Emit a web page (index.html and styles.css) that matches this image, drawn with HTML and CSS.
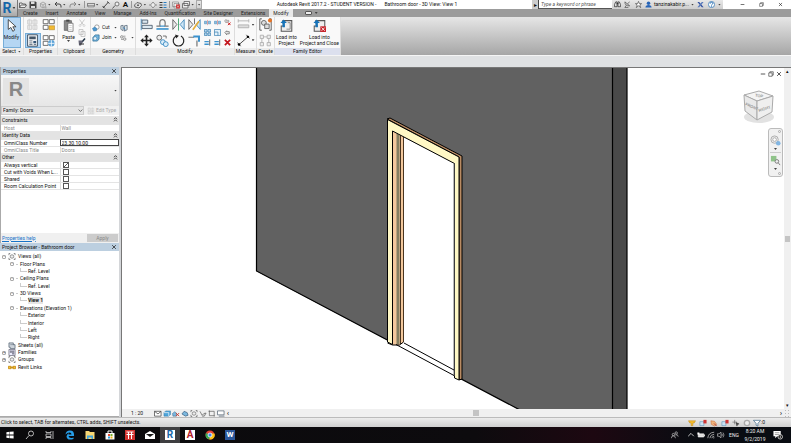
FILE: index.html
```html
<!DOCTYPE html>
<html lang="en">
<head>
  <meta charset="UTF-8" />
  <meta name="viewport" content="width=device-width, initial-scale=1.0"/>
  <title>Autodesk Revit 2017.2</title>
  <link rel="stylesheet" href="styles.css">
</head>
<body>

<!-- Icon set -->
<svg class="sprite" xmlns="http://www.w3.org/2000/svg">
  <symbol id="open" viewBox="0 0 16 16"><path d="M1 13V4h5l1 2h6v2M1 13l3-5h11l-3 5z" fill="#eee" stroke="#444" stroke-width="1.5"/></symbol>
  <symbol id="save" viewBox="0 0 16 16"><path d="M1 1h12l2 2v12H1z" fill="#444"/><path d="M4 1h7v5H4zM4 10h8v4H4z" fill="#ddd"/></symbol>
  <symbol id="sync" viewBox="0 0 16 16"><path d="M3 5l5-3 5 3v6l-5 3-5-3zM3 5l5 3 5-3M8 8v6" fill="none" stroke="#999" stroke-width="1.5"/><path d="M11 11h4v4h-4z" fill="#aaa"/></symbol>
  <symbol id="undo" viewBox="0 0 16 16"><path d="M6 2L2 6l4 4M2 6h8q4 0 4 4v3" fill="none" stroke="#444" stroke-width="2"/></symbol>
  <symbol id="redo" viewBox="0 0 16 16"><path d="M10 2l4 4-4 4M14 6H6q-4 0-4 4v3" fill="none" stroke="#888" stroke-width="2"/></symbol>
  <symbol id="ruler" viewBox="0 0 16 16"><path d="M1 4v7M15 4v7M2 5h12" fill="none" stroke="#666" stroke-width="1.5"/><path d="M2 9h12v3H2z" fill="#bbb" stroke="#777"/></symbol>
  <symbol id="line" viewBox="0 0 16 16"><path d="M2 14L13 2M1 10l5 5M10 1l5 4" fill="none" stroke="#444" stroke-width="2"/></symbol>
  <symbol id="tag" viewBox="0 0 16 16"><path d="M1 15l5-6" stroke="#555" stroke-width="2"/><circle cx="10" cy="6" r="4" fill="#eee" stroke="#555" stroke-width="1.5"/></symbol>
  <symbol id="house" viewBox="0 0 16 16"><path d="M1 8l5-5 8 2 1 4-5 5-8-2z" fill="#ddd" stroke="#444" stroke-width="1.5"/><path d="M6 7h4v3H6z" fill="#666"/></symbol>
  <symbol id="section" viewBox="0 0 16 16"><path d="M8 2l5 6-5 6-5-6zM0 8h3M13 8h3" fill="#eee" stroke="#777" stroke-width="1.5"/></symbol>
  <symbol id="thin" viewBox="0 0 16 16"><path d="M1 3h6M1 8h6M1 13h6" stroke="#333" stroke-width="2"/><path d="M9 3h6M9 8h6M9 13h6" stroke="#2b7dc0" stroke-width="2"/></symbol>
  <symbol id="closewin" viewBox="0 0 16 16"><path d="M1 2h12v9H1zM4 5h10v9H4z" fill="#eee" stroke="#666"/><path d="M8 7h8v8H8z" fill="#c33"/><path d="M10 9l4 4m0-4l-4 4" stroke="#fff"/></symbol>
  <symbol id="windows" viewBox="0 0 16 16"><path d="M4 1h11v8H4zM1 5h11v9H1z" fill="#eee" stroke="#555" stroke-width="1.5"/></symbol>

  <symbol id="cursor" viewBox="0 0 16 20"><path d="M3 1v15l4-3 3 6 3-2-3-5h5z" fill="#fff" stroke="#333" stroke-width="1.3"/></symbol>
  <symbol id="family" viewBox="0 0 32 32"><g fill="#eee" stroke="#ccc" stroke-width="2"><path d="M4 5h10v10H4zM17 5h10v10H17zM4 18h10v10H4zM17 18h10v10H17zM8 2v26M22 2v26"/></g></symbol>
  <symbol id="props" viewBox="0 0 32 32"><path d="M4 2h24v28H4z" fill="#fff" stroke="#234" stroke-width="2"/><path d="M8 6h16v7H8z" fill="#456"/><path d="M8 17h8M8 22h8M8 26h8M19 26h6" stroke="#456" stroke-width="2"/><path d="M18 17h7v6h-7z" fill="#357"/></symbol>
  <symbol id="types" viewBox="0 0 32 32"><path d="M3 4h12v10H3zM18 4h12v10H18zM3 18h12v10H3z" fill="#fff" stroke="#555" stroke-width="2"/><path d="M17 19h14v10H17z" fill="#f2ba32" stroke="#986b12"/></symbol>
  <symbol id="params" viewBox="0 0 32 32"><path d="M3 4h12v10H3zM18 4h12v10H18zM3 18h12v10H3z" fill="#fff" stroke="#555" stroke-width="2"/><circle cx="23" cy="23" r="8" fill="#5ba3d8"/><path d="M15 23h16M23 15v16" stroke="#fff" stroke-width="2"/></symbol>
  <symbol id="paste" viewBox="0 0 32 40"><path d="M3 5h22v30H3z" fill="#888" stroke="#555" stroke-width="2"/><path d="M9 2h10v6H9z" fill="#444"/><path d="M14 13h16v25H14z" fill="#fff" stroke="#555" stroke-width="2"/><path d="M18 20h8M18 26h8M18 32h8" stroke="#bbb" stroke-width="2"/></symbol>
  <symbol id="scissors" viewBox="0 0 16 16"><path d="M3 1l8 11M13 1L5 12" stroke="#bbb" stroke-width="1.5"/><circle cx="4" cy="13" r="2" fill="none" stroke="#bbb"/><circle cx="12" cy="13" r="2" fill="none" stroke="#bbb"/></symbol>
  <symbol id="copyclip" viewBox="0 0 16 16"><path d="M2 1h8v10H2zM6 5h8v10H6z" fill="#f7f7f7" stroke="#bbb" stroke-width="1.5"/></symbol>
  <symbol id="brush" viewBox="0 0 16 16"><path d="M14 1L8 8" stroke="#234" stroke-width="3"/><path d="M1 5h8v4l-3 6H2z" fill="#667"/><path d="M3 12h9" stroke="#333" stroke-width="2"/></symbol>
  <symbol id="cutgeo" viewBox="0 0 18 16"><circle cx="11" cy="6" r="5" fill="#fff" stroke="#777" stroke-width="1.5"/><path d="M1 9l5-3 5 3-1 5-6 1z" fill="#4b97d0" stroke="#276c9e"/></symbol>
  <symbol id="joingeo" viewBox="0 0 18 16"><path d="M7 1h9v9l-4 5H2V7z" fill="#72b5df" stroke="#286892" stroke-width="1.5"/><circle cx="7" cy="9" r="4" fill="#e7f4fc" stroke="#286892"/></symbol>
  <symbol id="split" viewBox="0 0 18 16"><path d="M2 3l5-1v12l-5-3zM10 3l6-1v10l-6 3z" fill="#dce8ee" stroke="#456" stroke-width="1.5"/><path d="M7 7l5 4" stroke="#3380bb" stroke-width="2"/></symbol>
  <symbol id="circles" viewBox="0 0 22 16"><circle cx="5" cy="5" r="3.5" fill="#eee" stroke="#555" stroke-width="1.5"/><circle cx="13" cy="11" r="3.5" fill="#eee" stroke="#555" stroke-width="1.5"/><path d="M9 3h6M3 12h5" stroke="#555" stroke-width="1.5"/></symbol>
  <symbol id="align" viewBox="0 0 32 32"><path d="M3 2v28" stroke="#2c80be" stroke-width="2"/><path d="M5 5h14v8H5zM5 18h25v8H5z" fill="#dbe8f1" stroke="#456" stroke-width="2"/></symbol>
  <symbol id="offset" viewBox="0 0 32 32"><path d="M1 20h9q-3-16 6-16t6 16h9" fill="none" stroke="#777" stroke-width="3"/><path d="M1 27h30" stroke="#3b92ce" stroke-width="4"/><path d="M10 20h12" stroke="#3b92ce" stroke-width="3"/></symbol>
  <symbol id="mirror" viewBox="0 0 32 32"><path d="M2 4l10 12L2 28z" fill="#eee" stroke="#555" stroke-width="2"/><path d="M30 4L20 16l10 12z" fill="#cfe5f5" stroke="#3984b8" stroke-width="2"/><path d="M16 1v30" stroke="#2c9b5c" stroke-width="2"/></symbol>
  <symbol id="mirrordraw" viewBox="0 0 32 32"><path d="M2 4l10 12L2 28z" fill="#eee" stroke="#555" stroke-width="2"/><path d="M30 4L20 16l10 12z" fill="#cfe5f5" stroke="#3984b8" stroke-width="2"/><path d="M12 29L27 8" stroke="#e6ae37" stroke-width="4"/><path d="M16 1v14" stroke="#555" stroke-width="2"/></symbol>
  <symbol id="move" viewBox="0 0 32 32"><path d="M16 1l6 7h-4v6h6v-4l7 6-7 6v-4h-6v6h4l-6 7-6-7h4v-6H8v4l-7-6 7-6v4h6V8h-4z" fill="#222"/></symbol>
  <symbol id="copy" viewBox="0 0 32 32"><circle cx="8" cy="9" r="6" fill="#eee" stroke="#555" stroke-width="2"/><path d="M17 5h8v6" fill="none" stroke="#555" stroke-width="2"/><circle cx="17" cy="20" r="6" fill="#dceefa" stroke="#2c82be" stroke-width="2"/><circle cx="24" cy="25" r="6" fill="#dceefa" stroke="#2c82be" stroke-width="2"/></symbol>
  <symbol id="rotate" viewBox="0 0 32 32"><path d="M10 5a13 13 0 1 0 12 0" fill="none" stroke="#222" stroke-width="3"/><path d="M8 1l9 3-7 7z" fill="#222"/></symbol>
  <symbol id="trim" viewBox="0 0 32 32"><path d="M1 8h14M22 16v15" fill="none" stroke="#777" stroke-width="3"/><path d="M13 6h14v13" fill="none" stroke="#3b92ce" stroke-width="5"/></symbol>
  <symbol id="splitel" viewBox="0 0 16 16"><path d="M1 5h5v6H1zM10 5h5v6h-5z" fill="#8bc0e4" stroke="#2e77ab"/><path d="M8 2v12" stroke="#c44"/></symbol>
  <symbol id="unpin" viewBox="0 0 16 16"><path d="M1 4l4-3v2h6v4H5v2z" fill="#ddd" stroke="#666"/><path d="M9 8l6 6m0-6l-6 6" stroke="#c00" stroke-width="2"/></symbol>
  <symbol id="array" viewBox="0 0 16 16"><path d="M1 1h6v6H1zM9 1h6v6H9zM1 9h6v6H1zM9 9h6v6H9z" fill="#b5d7ee" stroke="#2e77ab" stroke-width="1.5"/></symbol>
  <symbol id="scale" viewBox="0 0 16 16"><path d="M1 1h14v14H1z" fill="#e3f1fa" stroke="#2e77ab" stroke-width="1.5"/><path d="M1 7h8v8" fill="none" stroke="#2e77ab" stroke-width="1.5"/></symbol>
  <symbol id="pin" viewBox="0 0 16 16"><path d="M2 8l4-4v2h6v5H6v2z" fill="#eee" stroke="#555" stroke-width="1.5"/></symbol>
  <symbol id="extend" viewBox="0 0 16 16"><path d="M13 1v14" stroke="#555" stroke-width="2"/><path d="M1 6h10M1 12h10" stroke="#3b92ce" stroke-width="3"/></symbol>
  <symbol id="delete" viewBox="0 0 16 16"><path d="M2 2l12 12M14 2L2 14" stroke="#c3141c" stroke-width="4"/></symbol>
  <symbol id="measure" viewBox="0 0 32 32"><path d="M3 7h26M3 3v8M29 3v8" stroke="#aaa" stroke-width="2"/><path d="M3 17h26v7H3z" fill="#ddd" stroke="#aaa" stroke-width="2"/></symbol>
  <symbol id="dimension" viewBox="0 0 32 32"><path d="M5 26L27 7M1 21l8 9M23 2l8 9" stroke="#222" stroke-width="2"/><circle cx="5" cy="26" r="3"/><circle cx="27" cy="7" r="3"/></symbol>
  <symbol id="group" viewBox="0 0 32 32"><path d="M7 2H2v28h5M25 2h5v28h-5" fill="none" stroke="#444" stroke-width="2"/><circle cx="12" cy="12" r="6" fill="#ddd" stroke="#555" stroke-width="2"/><path d="M14 15h11v11H14z" fill="#ddd" stroke="#555" stroke-width="2"/><circle cx="27" cy="6" r="5" fill="#e87424"/></symbol>
  <symbol id="similar" viewBox="0 0 32 32"><path d="M3 3h8v8H3zM20 3h8v8h-8zM3 21h8v8H3zM20 21h8v8h-8zM11 7h9M7 11v10M24 11v10" fill="#eee" stroke="#aaa" stroke-width="2"/></symbol>
  <symbol id="load" viewBox="0 0 32 32"><path d="M7 11V4h22v26H3V17h9" fill="#eee" stroke="#555" stroke-width="2.5"/><path d="M19 9h6v16h-9" fill="none" stroke="#777" stroke-width="2"/><path d="M9 1l8 9h-5v10H6V10H1z" fill="#1673b9"/></symbol>
  <symbol id="loadclose" viewBox="0 0 32 32"><path d="M7 11V4h22v26H3V17h9" fill="#eee" stroke="#555" stroke-width="2.5"/><path d="M9 1l8 9h-5v10H6V10H1z" fill="#1673b9"/><path d="M18 18h14v14H18z" fill="#c8242b"/><path d="M21 21l8 8m0-8l-8 8" stroke="#fff" stroke-width="2"/></symbol>

  <symbol id="binoc" viewBox="0 0 16 16"><path d="M1 13V8l3-6h3v11zM9 13V2h3l3 6v5z" fill="#ddd" stroke="#222" stroke-width="1.5"/><path d="M6 6h4" stroke="#222" stroke-width="2"/></symbol>
  <symbol id="dish" viewBox="0 0 16 16"><path d="M2 2q0 10 11 9zM5 10l-3 5h8M8 6l5-4" fill="none" stroke="#444" stroke-width="1.5"/></symbol>
  <symbol id="star" viewBox="0 0 16 16"><path d="M8 1l2 5h5l-4 3 2 6-5-4-5 4 2-6-4-3h5z" fill="#fff" stroke="#333" stroke-width="1.3"/></symbol>
  <symbol id="person" viewBox="0 0 16 16"><circle cx="8" cy="5" r="4" fill="#2764b7"/><path d="M1 15q0-6 7-6t7 6z" fill="#2764b7"/></symbol>
  <symbol id="exchange" viewBox="0 0 16 16"><path d="M1 2h4l10 12h-4z" fill="#2d4da0"/><path d="M15 2h-4L1 14h4z" fill="#5577bb"/></symbol>
  <symbol id="help" viewBox="0 0 16 16"><circle cx="8" cy="8" r="7" fill="#fff" stroke="#1865ad" stroke-width="1.5"/><path d="M5 6q0-3 3-3t3 3q0 1-3 3v1M8 11v2" fill="none" stroke="#1865ad" stroke-width="2"/></symbol>
  <symbol id="min" viewBox="0 0 16 16"><path d="M2 8h12" stroke="#222" stroke-width="2"/></symbol>
  <symbol id="restore" viewBox="0 0 16 16"><path d="M2 5h9v9H2zM5 5V2h9v9h-3" fill="none" stroke="#222" stroke-width="1.5"/></symbol>
  <symbol id="x" viewBox="0 0 16 16"><path d="M3 3l10 10M13 3L3 13" stroke="#222" stroke-width="2"/></symbol>
  <symbol id="chevs" viewBox="0 0 16 16"><path d="M3 7l5-5 5 5M3 14l5-5 5 5" fill="none" stroke="#222" stroke-width="2.5"/></symbol>
  <symbol id="chev" viewBox="0 0 16 16"><path d="M2 5l6 6 6-6" fill="none" stroke="#555" stroke-width="2.5"/></symbol>
  <symbol id="views" viewBox="0 0 16 16"><path d="M4 1H1v4M12 1h3v4M4 15H1v-4M12 15h3v-4" fill="none" stroke="#555" stroke-width="1.5"/><circle cx="8" cy="8" r="4" fill="#eee" stroke="#666" stroke-width="1.5"/></symbol>
  <symbol id="sheet" viewBox="0 0 16 16"><path d="M1 2h10v4h4v9H4v-3H1z" fill="#cdd3da" stroke="#456" stroke-width="1.5"/><path d="M4 6h8" stroke="#456"/></symbol>
  <symbol id="fam" viewBox="0 0 16 16"><path d="M1 1h14v14H1z" fill="#eef" stroke="#556" stroke-width="1.5"/><path d="M4 4h3v4H4zM9 4h3v8H9z" fill="#99a" stroke="#556"/></symbol>
  <symbol id="link" viewBox="0 0 20 16"><path d="M1 5h7v6H1zM12 5h7v6h-7zM6 8h8" fill="#f5c43a" stroke="#c3860b" stroke-width="2"/></symbol>

  <symbol id="detail" viewBox="0 0 18 16"><path d="M1 3h15v11H1z" fill="#fff" stroke="#333" stroke-width="1.5"/><path d="M1 3l8 6 7-6" fill="none" stroke="#333" stroke-width="1.5"/></symbol>
  <symbol id="style" viewBox="0 0 18 16"><path d="M2 6l4-4h11v8l-4 4H2z" fill="#4fa5da" stroke="#276f9c"/><path d="M2 6h11v8" fill="none" stroke="#fff" stroke-width="1.5"/></symbol>
  <symbol id="sun" viewBox="0 0 18 16"><path d="M1 8l5-4 4 3v7H2z" fill="#7bb8df" stroke="#357"/><path d="M9 7l7 7m0-7l-7 7" stroke="#c32" stroke-width="2"/></symbol>
  <symbol id="shadow" viewBox="0 0 18 16"><path d="M2 9l5-6 7 3 2 6-6 2z" fill="#7bb8df" stroke="#357" stroke-width="1.5"/></symbol>
  <symbol id="crop" viewBox="0 0 18 16"><path d="M3 1v12h12M1 3h13v12" fill="none" stroke="#555" stroke-width="1.5"/></symbol>
  <symbol id="region" viewBox="0 0 18 16"><path d="M1 2h15v9H1zM4 14h13" fill="#fff" stroke="#456" stroke-width="1.5"/></symbol>
  <symbol id="glasses" viewBox="0 0 18 16"><path d="M2 3l5 9 4-4 5-1-4 7H7" fill="#ddd" stroke="#555" stroke-width="1.5"/></symbol>
  <symbol id="selhand" viewBox="0 0 18 16"><path d="M1 3h16l-3 5h-3v6H7V8H4z" fill="#f5bd2e" stroke="#b87d0c"/></symbol>
  <symbol id="selred" viewBox="0 0 18 16"><path d="M2 5h9v9H2z" fill="#c9e2f3" stroke="#377cab"/><path d="M10 1h7v8h-7z" fill="#cf3434"/></symbol>
  <symbol id="selorange" viewBox="0 0 18 16"><path d="M2 3l8 1 5 7-5 4-7-4z" fill="#f0b47d" stroke="#c25820"/><path d="M9 9l6 6" stroke="#a33" stroke-width="2"/></symbol>
  <symbol id="seldrag" viewBox="0 0 18 16"><path d="M6 1v10M1 6h10M9 7l7 3-3 1-2 4z" fill="#333" stroke="#333"/></symbol>
  <symbol id="ring" viewBox="0 0 18 16"><circle cx="9" cy="8" r="6" fill="#eee" stroke="#aaa" stroke-width="3"/></symbol>
  <symbol id="filter" viewBox="0 0 18 16"><path d="M1 2h16l-6 7v6l-4-2V9z" fill="#fff" stroke="#345f80" stroke-width="1.5"/></symbol>

  <symbol id="win" viewBox="0 0 20 20"><path d="M1 3l8-1v7H1zM10 2l9-1v8h-9zM1 11h8v7l-8-1zM10 11h9v8l-9-1z" fill="#fff"/></symbol>
  <symbol id="search" viewBox="0 0 20 20"><circle cx="12" cy="7" r="5" fill="none" stroke="#eee" stroke-width="1.5"/><path d="M8 11l-6 7" stroke="#eee" stroke-width="1.5"/></symbol>
  <symbol id="taskview" viewBox="0 0 20 20"><path d="M2 2v3h10V2M2 8h10v5H2zM2 18v-3h10v3M16 2v16" fill="none" stroke="#ddd" stroke-width="1.5"/></symbol>
  <symbol id="edge" viewBox="0 0 20 20"><path d="M18 12H7q1 5 7 4l3-1v3q-13 4-14-5 0-4 5-7-1 2-1 3h6q0-4-4-4-4 0-8 4Q2 1 10 1q9 0 8 11z" fill="#279ee8"/></symbol>
  <symbol id="explorer" viewBox="0 0 20 20"><path d="M1 2h7l2 2h9v14H1z" fill="#f8d775"/><path d="M4 11h12v7h-3v-3H7v3H4z" fill="#42a5dc"/></symbol>
  <symbol id="store" viewBox="0 0 20 20"><path d="M6 6V2h8v4" fill="none" stroke="#fff" stroke-width="2"/><path d="M1 6h18v13H1z" fill="#fff"/><path d="M6 8h4v4H6z" fill="#e64c31"/><path d="M11 8h4v4h-4z" fill="#7bb22d"/><path d="M6 13h4v4H6z" fill="#2a9ce0"/><path d="M11 13h4v4h-4z" fill="#f4b71d"/></symbol>
  <symbol id="redapp" viewBox="0 0 20 20"><path d="M0 0h20v20H0z" fill="#d2332f"/><path d="M3 4h14M3 9h14M7 4v14M13 4v14" stroke="#fff" stroke-width="2"/></symbol>
  <symbol id="mail" viewBox="0 0 20 20"><path d="M0 8l10-6 10 6v10H0z" fill="#fff"/><path d="M2 8h16l-8 6z" fill="#161616"/></symbol>
  <symbol id="chrome" viewBox="0 0 20 20"><circle cx="10" cy="10" r="9" fill="#e84335"/><path d="M10 10L2 6a9 9 0 0 0 7 13z" fill="#35a853"/><path d="M10 10l-1 9A9 9 0 0 0 19 7h-9z" fill="#fbc116"/><circle cx="10" cy="10" r="4" fill="#4286f4" stroke="#fff" stroke-width="1.5"/></symbol>
  <symbol id="people" viewBox="0 0 20 20"><circle cx="13" cy="5" r="3" fill="none" stroke="#ddd" stroke-width="1.5"/><circle cx="6" cy="9" r="3" fill="none" stroke="#ddd" stroke-width="1.5"/><path d="M1 18q0-6 5-6t5 6M11 10q6-3 7 4" fill="none" stroke="#ddd" stroke-width="1.5"/></symbol>
  <symbol id="up" viewBox="0 0 20 20"><path d="M3 13l7-7 7 7" fill="none" stroke="#eee" stroke-width="2"/></symbol>
  <symbol id="battery" viewBox="0 0 20 20"><path d="M3 7h14v8H3z" fill="#ddd" stroke="#fff" stroke-width="1.5"/><path d="M18 9h2v4h-2zM1 4h5v5H1z" fill="#fff"/></symbol>
  <symbol id="wifi" viewBox="0 0 20 20"><path d="M2 18Q3 4 18 3M7 18Q8 9 18 8M12 18q1-5 6-5" fill="none" stroke="#bbb" stroke-width="2"/><path d="M15 18h3v-3z" fill="#fff"/></symbol>
  <symbol id="sound" viewBox="0 0 20 20"><path d="M1 7h4l5-4v14l-5-4H1zM12 7q3 3 0 6M15 4q5 6 0 12" fill="none" stroke="#ddd" stroke-width="1.5"/></symbol>
  <symbol id="notify" viewBox="0 0 22 22"><path d="M1 2h16v12H9l-4 4v-4H1z" fill="#fff"/><path d="M4 6h10M4 10h10" stroke="#333"/><circle cx="16" cy="15" r="5" fill="#111" stroke="#fff" stroke-width="1.5"/><path d="M16 12v6" stroke="#fff" stroke-width="1.5"/></symbol>
</svg>

<div class="app">
  <header class="top">
    <button class="app-button"><b>R</b><i class="caret"></i></button>

    <div class="titlebar">
      <div class="qat">
        <button><svg><use href="#open"/></svg></button>
        <button><svg><use href="#save"/></svg></button>
        <button><svg><use href="#sync"/></svg></button><i class="caret"></i>
        <button><svg><use href="#undo"/></svg></button><i class="caret"></i>
        <button><svg><use href="#redo"/></svg></button><i class="caret"></i>
        <i class="sep"></i>
        <button><svg><use href="#ruler"/></svg></button><i class="caret"></i>
        <button><svg><use href="#line"/></svg></button>
        <button><svg><use href="#tag"/></svg></button>
        <button class="text-tool">A</button>
        <i class="sep"></i>
        <button><svg><use href="#house"/></svg></button><i class="caret"></i>
        <button><svg><use href="#section"/></svg></button>
        <button><svg><use href="#thin"/></svg></button>
        <i class="sep"></i>
        <button><svg><use href="#closewin"/></svg></button>
        <button><svg><use href="#windows"/></svg></button><i class="caret"></i>
        <button class="more"><i class="caret"></i></button>
      </div>
      <div class="title"><span>Autodesk Revit 2017.2 - STUDENT VERSION -</span><span>Bathroom door - 3D View: View 1</span></div>
      <div class="info">
        <button class="play" aria-label="Show search">&#9656;</button>
        <input class="search" type="text" placeholder="Type a keyword or phrase" aria-label="Search help">
        <div class="info-tools">
          <button><svg><use href="#binoc"/></svg></button>
          <button><svg><use href="#dish"/></svg></button>
          <button><svg><use href="#star"/></svg></button>
          <button class="user"><svg><use href="#person"/></svg>tanzinakabir.p...<i class="caret"></i></button>
          <button><svg><use href="#exchange"/></svg></button>
          <button><svg><use href="#help"/></svg></button><i class="caret"></i>
        </div>
      </div>
      <div class="win-buttons">
        <button aria-label="Minimize"><svg><use href="#min"/></svg></button>
        <button aria-label="Restore"><svg><use href="#restore"/></svg></button>
        <button aria-label="Close"><svg><use href="#x"/></svg></button>
      </div>
    </div>

    <nav class="tabs">
      <button>Create</button>
      <button>Insert</button>
      <button>Annotate</button>
      <button>View</button>
      <button>Manage</button>
      <button>Add-Ins</button>
      <button>Quantification</button>
      <button>Site Designer</button>
      <button>Extensions</button>
      <button class="active">Modify</button>
      <button class="collapse" aria-label="Collapse ribbon"><i class="pill"></i><i class="caret"></i></button>
    </nav>
  </header>

  <div class="ribbon">
    <section class="panel p-select">
      <div class="tools"><button class="big on"><svg class="mid"><use href="#cursor"/></svg>Modify</button></div>
      <h2>Select <i class="caret"></i></h2>
    </section>
    <section class="panel p-props">
      <div class="tools grid2">
        <button><svg class="mid"><use href="#family"/></svg></button>
        <button><svg class="mid"><use href="#types"/></svg></button>
        <button class="on"><svg class="mid"><use href="#props"/></svg></button>
        <button><svg class="mid"><use href="#params"/></svg></button>
      </div>
      <h2>Properties</h2>
    </section>
    <section class="panel p-clip">
      <div class="tools">
        <button class="big"><svg class="mid"><use href="#paste"/></svg>Paste<i class="caret"></i></button>
        <div class="stack">
          <button><svg><use href="#scissors"/></svg></button>
          <button><svg><use href="#copyclip"/></svg></button>
          <button><svg><use href="#brush"/></svg></button>
        </div>
      </div>
      <h2>Clipboard</h2>
    </section>
    <section class="panel p-geo">
      <div class="tools geo">
        <button><svg><use href="#cutgeo"/></svg>Cut</button><i class="caret"></i><button><svg><use href="#split"/></svg></button><i></i>
        <button><svg><use href="#joingeo"/></svg>Join</button><i class="caret"></i><button><svg><use href="#circles"/></svg></button><i class="caret"></i>
      </div>
      <h2>Geometry</h2>
    </section>
    <section class="panel p-modify">
      <div class="tools">
        <div class="grid4">
          <button><svg class="mid"><use href="#align"/></svg></button>
          <button><svg class="mid"><use href="#offset"/></svg></button>
          <button><svg class="mid"><use href="#mirror"/></svg></button>
          <button><svg class="mid"><use href="#mirrordraw"/></svg></button>
          <button><svg class="mid"><use href="#move"/></svg></button>
          <button><svg class="mid"><use href="#copy"/></svg></button>
          <button><svg class="mid"><use href="#rotate"/></svg></button>
          <button><svg class="mid"><use href="#trim"/></svg></button>
        </div>
        <div class="grid3">
          <button><svg><use href="#splitel"/></svg></button>
          <button><svg><use href="#splitel"/></svg></button>
          <button><svg><use href="#unpin"/></svg></button>
          <button><svg><use href="#array"/></svg></button>
          <button><svg><use href="#scale"/></svg></button>
          <button><svg><use href="#pin"/></svg></button>
          <button><svg><use href="#extend"/></svg></button>
          <button><svg><use href="#extend"/></svg></button>
          <button><svg><use href="#delete"/></svg></button>
        </div>
      </div>
      <h2>Modify</h2>
    </section>
    <section class="panel p-measure">
      <div class="tools pair">
        <button><svg class="mid"><use href="#measure"/></svg><i class="caret"></i></button>
        <button><svg class="mid"><use href="#dimension"/></svg><i class="caret"></i></button>
      </div>
      <h2>Measure</h2>
    </section>
    <section class="panel p-create">
      <div class="tools pair">
        <button><svg class="mid"><use href="#group"/></svg></button>
        <button><svg class="mid"><use href="#similar"/></svg></button>
      </div>
      <h2>Create</h2>
    </section>
    <section class="panel p-family">
      <div class="tools">
        <button class="big"><svg class="mid"><use href="#load"/></svg>Load into<br>Project</button>
        <button class="big"><svg class="mid"><use href="#loadclose"/></svg>Load into<br>Project and Close</button>
      </div>
      <h2>Family Editor</h2>
    </section>
  </div>

  <div class="options"></div>

  <main class="work">
    <aside class="side">
      <section class="properties">
        <h3>Properties<button aria-label="Close"><svg><use href="#x"/></svg></button></h3>
        <div class="type"><span class="thumb">R</span><i class="caret"></i></div>
        <div class="family-row">
          <div class="select-wrap">
            <select aria-label="Family"><option>Family: Doors</option></select>
            <svg><use href="#chev"/></svg>
          </div>
          <button disabled><svg><use href="#family"/></svg>Edit Type</button>
        </div>
        <table>
          <tbody>
            <tr class="group"><th colspan="2"><span>Constraints<svg><use href="#chevs"/></svg></span></th></tr>
            <tr class="off"><td>Host</td><td>Wall</td></tr>
            <tr class="group"><th colspan="2"><span>Identity Data<svg><use href="#chevs"/></svg></span></th></tr>
            <tr><td><label for="omni">OmniClass Number</label></td><td class="edit"><input id="omni" type="text" value="23.30.10.00"></td></tr>
            <tr class="off"><td>OmniClass Title</td><td>Doors</td></tr>
            <tr class="group"><th colspan="2"><span>Other<svg><use href="#chevs"/></svg></span></th></tr>
            <tr><td><label for="vertical">Always vertical</label></td><td><input id="vertical" type="checkbox" checked></td></tr>
            <tr><td><label for="voids">Cut with Voids When L...</label></td><td><input id="voids" type="checkbox"></td></tr>
            <tr><td><label for="shared">Shared</label></td><td><input id="shared" type="checkbox"></td></tr>
            <tr><td><label for="room">Room Calculation Point</label></td><td><input id="room" type="checkbox"></td></tr>
          </tbody>
        </table>
        <footer><a href="#">Properties help</a><button disabled>Apply</button></footer>
      </section>

      <section class="browser">
        <h3>Project Browser - Bathroom door<button aria-label="Close"><svg><use href="#x"/></svg></button></h3>
        <ul>
          <li><i class="box">−</i><svg><use href="#views"/></svg>Views (all)</li>
          <li class="l1"><i class="box">−</i><i class="dash"></i>Floor Plans</li>
          <li class="l2"><i class="elbow"></i>Ref. Level</li>
          <li class="l1"><i class="box">−</i><i class="dash"></i>Ceiling Plans</li>
          <li class="l2"><i class="elbow"></i>Ref. Level</li>
          <li class="l1"><i class="box">−</i><i class="dash"></i>3D Views</li>
          <li class="l2"><i class="elbow"></i><b>View 1</b></li>
          <li class="l1"><i class="box">−</i><i class="dash"></i>Elevations (Elevation 1)</li>
          <li class="l2"><i class="elbow"></i>Exterior</li>
          <li class="l2"><i class="elbow"></i>Interior</li>
          <li class="l2"><i class="elbow"></i>Left</li>
          <li class="l2"><i class="elbow"></i>Right</li>
          <li><i class="nobox"></i><svg><use href="#sheet"/></svg>Sheets (all)</li>
          <li><i class="box">+</i><svg><use href="#fam"/></svg>Families</li>
          <li><i class="box">+</i><svg><use href="#views"/></svg>Groups</li>
          <li><i class="nobox"></i><svg><use href="#link"/></svg>Revit Links</li>
        </ul>
      </section>
    </aside>

    <section class="view">
      <div class="canvas">
        <svg class="scene" viewBox="122 68 662 341" preserveAspectRatio="xMinYMin slice">
          <!-- wall -->
          <path d="M256 68H613V459L256 271z" fill="#616161"/>
          <path d="M612 68h15v345h-15z" fill="#4a4a4a"/>
          <path d="M256.500 68V271L520 410M612.500 68V410M627 68V410" fill="none" stroke="#000" stroke-width="1.200"/>
          <!-- opening -->
          <path d="M392 131L454 163V385L388 350V340z" fill="#fff"/>
          <!-- inner jamb -->
          <path d="M392 131l12 6V342l-4 3h-8z" fill="#f3c89d"/>
          <path d="M396.500 133l3 2V344h-3z" fill="#858062"/>
          <path d="M400.500 135V344M403.500 137V342" stroke="#4a3520"/>
          <!-- frame -->
          <path d="M387 119l3-1 72 38v223l-3 1V157z" fill="#b98b63" stroke="#000"/>
          <path d="M387.500 119.500L459 157V380L454.500 378V163.500L392.500 131V344.500L387.500 342z" fill="#fff8c5" stroke="#000"/>
          <path d="M454 163.500V376" stroke="#777"/>
          <path d="M387.500 343l5 2h7l4-3" fill="none" stroke="#000"/>
          <!-- threshold -->
          <path d="M396 344.500L454 375.500M404 343L454 370" fill="none" stroke="#000"/>
        </svg>
        <div class="mdi">
          <button aria-label="Minimize view"><svg><use href="#min"/></svg></button>
          <button aria-label="Restore view"><svg><use href="#restore"/></svg></button>
          <button aria-label="Close view"><svg><use href="#x"/></svg></button>
        </div>
        <svg class="cube" viewBox="0 0 36 38">
          <ellipse cx="18" cy="29" rx="15" ry="6" fill="#e2e2e2"/>
          <path d="M3 7l15-4 14 5-16 5z" fill="#f4f4f4" stroke="#aaa"/>
          <path d="M3 7l13 6v19L4 23z" fill="#e9e9e9" stroke="#aaa"/>
          <path d="M32 8l-16 5v19l15-8z" fill="#efefef" stroke="#aaa"/>
          <text x="14" y="9" transform="rotate(8 17 8)">TOP</text>
          <text x="4" y="17" transform="rotate(24 4 17)">FRONT</text>
          <text x="18" y="24" transform="rotate(-18 18 24)">RIGHT</text>
        </svg>
        <div class="navbar">
          <i class="dot"></i>
          <svg viewBox="0 0 24 24"><circle cx="10" cy="10" r="8" fill="#eee" stroke="#aaa" stroke-width="2"/><circle cx="10" cy="10" r="4" fill="#fff" stroke="#aaa" stroke-width="2"/><circle cx="18" cy="18" r="5" fill="#82b6e3"/></svg>
          <i class="caret"></i>
          <hr>
          <svg viewBox="0 0 24 24"><path d="M2 2h12v12H2z" fill="#8fc389"/><circle cx="15" cy="14" r="4" fill="#eee" stroke="#777" stroke-width="2"/><path d="M18 17l4 5" stroke="#777" stroke-width="2"/></svg>
          <i class="caret"></i>
          <i class="dot last"></i>
        </div>
      </div>
      <div class="vscroll"><span>&#9652;</span><i></i><span>&#9662;</span></div>
      <div class="viewbar">
        <span class="ratio">1 : 20</span>
        <button><svg><use href="#detail"/></svg></button>
        <button><svg><use href="#style"/></svg></button>
        <button><svg><use href="#sun"/></svg></button>
        <button><svg><use href="#shadow"/></svg></button>
        <button><svg><use href="#views"/></svg></button>
        <button><svg><use href="#glasses"/></svg></button>
        <button><svg><use href="#crop"/></svg></button>
        <button><svg><use href="#region"/></svg></button>
        <span class="arrow">&lsaquo;</span>
        <div class="hscroll"><i></i></div>
        <span class="arrow">&rsaquo;</span>
      </div>
      <div class="grip"></div>
    </section>
  </main>

  <div class="status">
    <span>Click to select, TAB for alternates, CTRL adds, SHIFT unselects.</span>
    <div class="status-tools">
      <button><svg><use href="#selhand"/></svg></button>
      <button><svg><use href="#selred"/></svg></button>
      <button><svg><use href="#selorange"/></svg></button>
      <button><svg><use href="#selred"/></svg></button>
      <button><svg><use href="#seldrag"/></svg></button>
      <button><svg><use href="#ring"/></svg></button>
      <button class="count"><svg><use href="#filter"/></svg>:0</button>
    </div>
  </div>

  <footer class="taskbar">
    <div class="apps">
      <button><svg><use href="#win"/></svg></button>
      <button><svg><use href="#search"/></svg></button>
      <button><svg><use href="#taskview"/></svg></button>
      <button><svg><use href="#edge"/></svg></button>
      <button><svg><use href="#explorer"/></svg></button>
      <button><svg><use href="#store"/></svg></button>
      <button><svg><use href="#redapp"/></svg></button>
      <button><svg><use href="#mail"/></svg></button>
      <button class="active"><b class="tile revit">R</b></button>
      <button><b class="tile acad">A</b></button>
      <button><svg><use href="#chrome"/></svg></button>
      <button><b class="tile word">W</b></button>
    </div>
    <div class="tray">
      <svg class="people"><use href="#people"/></svg>
      <svg><use href="#up"/></svg>
      <svg><use href="#battery"/></svg>
      <svg><use href="#wifi"/></svg>
      <svg><use href="#sound"/></svg>
      <span class="lang">ENG</span>
      <time>8:20 AM<br>9/2/2019</time>
      <svg class="notify"><use href="#notify"/></svg>
    </div>
  </footer>
</div>

</body>
</html>
```
FILE: styles.css
```css
* { box-sizing: border-box; }
body {
  margin: 0;
  font-family: Roboto, "Open Sans", sans-serif;
  font-size: 5px;
  line-height: 7px;
  color: #111;
  overflow: hidden;
}
h2, h3, ul { margin: 0; padding: 0; font-size: 5px; font-weight: normal; }
button, input, select { font: inherit; color: inherit; }
button {
  display: flex;
  align-items: center;
  justify-content: center;
  padding: 0;
  border: 0;
  background: none;
  white-space: nowrap;
}
svg { display: block; flex: none; width: 8px; height: 8px; }
svg.mid { width: 13px; height: 13px; }
.sprite { position: absolute; width: 0; height: 0; }
.caret {
  flex: none;
  width: 3px;
  height: 2px;
  background: #444;
  clip-path: polygon(0 0, 100% 0, 50% 100%);
}
.app {
  display: flex;
  flex-direction: column;
  height: 100vh;
}

/* Title bar and tabs */
.top {
  display: grid;
  grid-template-columns: 18px 1fr;
  grid-template-rows: 9px 8px;
  background: #9c9c9c;
}
.app-button {
  grid-row: 1 / 3;
  gap: 1px;
  background: linear-gradient(#e4e4e4, #a9a9a9);
  border: 1px solid #777;
  border-top: 0;
}
.app-button b { font-size: 14px; line-height: 14px; color: #1766a8; }
.titlebar { display: flex; background: #fff; }
.qat {
  display: flex;
  align-items: center;
  width: 184px;
  background: linear-gradient(#e8e8e8, #cecece);
}
.qat button { width: 10px; }
.qat .caret { margin-right: 2px; }
.qat .sep { width: 1px; height: 7px; margin: 0 1px; background: #999; }
.qat .text-tool { font-weight: bold; font-size: 8px; }
.qat .more { width: 6px; height: 9px; border: 1px solid #aaa; }
.qat .more .caret { margin: 0; }
.title {
  flex: 1;
  display: flex;
  align-items: center;
  justify-content: center;
  gap: 8px;
  white-space: nowrap;
}
.info { display: flex; width: 191px; }
.play { width: 7px; background: #ccc; border-right: 1px solid #444; font-size: 6px; }
.search {
  width: 73px;
  height: 9px;
  padding: 0 2px;
  border: 0;
  border-bottom: 1px solid #555;
  background: #fff;
  font-style: italic;
}
.search::placeholder { color: #555; }
.info-tools {
  flex: 1;
  display: flex;
  align-items: center;
  justify-content: space-between;
  padding: 0 2px;
  background: linear-gradient(#e8e8e8, #cecece);
}
.info-tools svg { width: 7px; height: 7px; }
.user { gap: 2px; }
.win-buttons { display: flex; padding: 0 1px 0 10px; }
.win-buttons button { width: 19px; }
.win-buttons svg { width: 5px; height: 5px; }
.tabs { display: flex; padding-left: 1px; }
.tabs button { padding: 0 4px; color: #222; }
.tabs .active { background: #e9e9e9; }
.tabs .collapse { gap: 3px; padding-left: 12px; }
.pill { width: 7px; height: 4px; border: 1px solid #555; border-radius: 1px; background: #eee; }

/* Ribbon */
.ribbon {
  display: flex;
  height: 39px;
  background: linear-gradient(#e6e6e6, #a6a6a6);
  border-bottom: 1px solid #f5f5f5;
}
.panel {
  display: flex;
  flex-direction: column;
  border-right: 1px solid #ddd;
  background: #f9f9f9;
}
.panel h2 {
  display: flex;
  align-items: center;
  justify-content: center;
  gap: 2px;
  height: 7px;
  background: #ececec;
  white-space: nowrap;
}
.tools { flex: 1; display: flex; justify-content: center; }
.big { flex-direction: column; justify-content: flex-start; padding-top: 2px; line-height: 6px; text-align: center; }
.big svg { margin-bottom: 2px; }
.on { background: #b5d6f3; box-shadow: inset 0 0 0 1px #76add8; }
.p-select { width: 24px; }
.p-select .big { width: 18px; }
.p-props { width: 34px; }
.p-clip { width: 33px; }
.p-geo { width: 45px; }
.p-modify { width: 99px; }
.p-measure { width: 22px; }
.p-create { width: 18px; }
.p-family { width: 66px; }
.p-family h2 { background: #dce0ee; }
.p-family .tools { gap: 3px; }
.grid2 { display: grid; grid-template-columns: 16px 16px; grid-template-rows: 1fr 1fr; }
.p-clip .tools { gap: 3px; }
.stack { display: flex; flex-direction: column; justify-content: space-evenly; }
.geo { display: grid; grid-template-columns: 19px 3px 8px 3px; grid-template-rows: 10px 10px; gap: 0 3px; align-items: center; align-content: center; }
.geo button { justify-content: flex-start; gap: 2px; }
.p-modify .tools { justify-content: space-between; padding: 0 2px; }
.grid4 { display: grid; grid-template-columns: repeat(4, 16px); grid-template-rows: 1fr 1fr; }
.grid3 { display: grid; grid-template-columns: repeat(3, 10px); grid-template-rows: repeat(3, 1fr); }
.grid3 svg { width: 7px; height: 7px; }
.pair { flex-direction: column; }
.pair button { flex: 1; gap: 2px; }
.options { height: 11px; background: #dfe1e3; }

/* Left palettes */
.work { flex: 1; display: flex; min-height: 0; background: #d4d6d9; }
.side { display: flex; flex-direction: column; width: 119px; background: #fff; }
.side h3 {
  display: flex;
  align-items: center;
  justify-content: space-between;
  height: 8px;
  padding: 0 2px;
  background: #bccfe0;
}
.side h3 svg { width: 6px; height: 6px; }
.properties { display: flex; flex-direction: column; height: 176px; border-left: 1px solid #aaa; }
.type {
  display: flex;
  align-items: center;
  justify-content: space-between;
  height: 31px;
  padding: 2px;
  background: linear-gradient(#f7f7f7, #e6e6e6);
}
.thumb {
  width: 26px;
  height: 26px;
  background: #e4e4e4;
  color: #888;
  font: bold 20px/23px "Liberation Sans", sans-serif;
  text-align: center;
}
.family-row { display: flex; height: 9px; background: #f0f0f0; }
.select-wrap { position: relative; width: 83px; }
.select-wrap svg { position: absolute; top: 2px; right: 1px; width: 5px; height: 5px; pointer-events: none; }
.family-row select {
  appearance: none;
  display: block;
  width: 100%;
  height: 9px;
  padding: 0 1px;
  border: 1px solid #ccc;
  border-radius: 0;
  background: #e5e5e5;
}
.family-row button { flex: 1; gap: 1px; color: #aaa; }
table { width: 100%; margin-top: 1px; border-collapse: collapse; table-layout: fixed; }
tr { height: 7px; }
td, th {
  height: 7px;
  padding: 0 0 0 3px;
  line-height: 6px;
  text-align: left;
  font-weight: normal;
  border-bottom: 1px solid #e4e4e4;
  white-space: nowrap;
}
td + td { padding-left: 1px; border-left: 1px solid #ddd; }
td label, td input { display: block; }
.group th { height: 8px; padding: 0 1px; background: #e3e3e3; }
.group span { display: flex; align-items: center; justify-content: space-between; }
.group svg { width: 5px; height: 5px; }
.off { color: #888; }
td.edit { outline: 1px solid #444; outline-offset: -1px; }
.edit input { width: 100%; height: 6px; padding: 0; border: 0; background: none; }
input[type=checkbox] {
  appearance: none;
  width: 6px;
  height: 6px;
  margin: 0 0 0 1px;
  border: 1px solid #555;
  background: #fff;
}
input[type=checkbox]:checked { background: linear-gradient(135deg, #fff 40%, #555 40%, #555 60%, #fff 60%); }
.properties footer {
  display: flex;
  align-items: center;
  justify-content: space-between;
  height: 10px;
  margin-top: auto;
  padding: 0 1px;
  background: #f0f0f0;
}
.properties a { color: #1673c8; }
.properties footer button { width: 31px; height: 8px; background: #ccc; color: #888; }
.browser { flex: 1; border-bottom: 1px solid #aaa; }
.browser ul {
  display: flex;
  flex-direction: column;
  height: 118px;
  margin-top: 2px;
  padding-left: 2px;
  list-style: none;
}
.browser li { flex: 1; display: flex; align-items: center; gap: 2px; }
.browser li svg { width: 8px; height: 7px; }
.box, .nobox { width: 4px; height: 4px; }
.box { border: 1px solid #aaa; border-radius: 1px; color: #555; font-size: 4px; line-height: 2px; text-align: center; font-style: normal; }
.browser .l1 { padding-left: 8px; }
.browser .l2 { gap: 1px; padding-left: 18px; }
.dash { width: 2px; border-top: 1px solid #ccc; }
.elbow { width: 7px; height: 4px; margin-bottom: 3px; border-left: 1px solid #ccc; border-bottom: 1px solid #ccc; }
.l2 b { background: #e6e6e6; }

/* Drawing area */
.view {
  flex: 1;
  display: grid;
  grid-template-columns: 1fr 7px;
  grid-template-rows: 1fr 8px;
  min-width: 0;
  margin-left: 2px;
  border-top: 1px solid #777;
  border-left: 1px solid #777;
  background: #f0f0f0;
}
.canvas { position: relative; overflow: hidden; background: #fff; }
.scene { width: 100%; height: 100%; }
.mdi { position: absolute; top: 3px; right: 2px; display: flex; gap: 2px; }
.mdi svg { width: 6px; height: 6px; }
.cube { position: absolute; top: 20px; right: 7px; width: 36px; height: 38px; }
.cube text { font: bold 4px "Liberation Sans", sans-serif; fill: #999; }
.navbar {
  position: absolute;
  top: 60px;
  right: 1px;
  display: flex;
  flex-direction: column;
  align-items: center;
  gap: 2px;
  width: 15px;
  height: 49px;
  padding: 1px;
  border: 1px solid #bbb;
  border-radius: 3px;
  background: #f1f1f1;
}
.navbar svg { width: 11px; height: 11px; }
.navbar hr { width: 100%; margin: 0; border: 0; border-top: 1px solid #ccc; }
.dot { align-self: flex-end; width: 3px; height: 3px; border: 1px solid #aaa; border-radius: 50%; }
.last { margin-top: auto; }
.vscroll { display: flex; flex-direction: column; align-items: center; justify-content: space-between; }
.vscroll i { width: 5px; height: 6px; background: #c4c4c4; }
.viewbar { display: flex; align-items: center; padding-left: 9px; }
.ratio { width: 22px; }
.viewbar button { width: 9px; }
.viewbar svg { width: 8px; height: 7px; }
.arrow { width: 6px; font-size: 8px; text-align: center; }
.hscroll { flex: 1; display: flex; justify-content: center; }
.hscroll i { width: 6px; height: 6px; margin-right: 57px; background: #c4c4c4; }
.grip { background: radial-gradient(#bbb 1px, #f0f0f0 1px) 0 0 / 3px 3px; }

/* Status bar and taskbar */
.status {
  display: flex;
  align-items: center;
  justify-content: space-between;
  height: 10px;
  padding: 0 26px 0 1px;
  background: linear-gradient(#ececec, #cfcfcf);
  border-top: 1px solid #bbb;
}
.status-tools { display: flex; gap: 1px; }
.status-tools button { width: 10px; }
.status-tools .count { width: auto; }
.taskbar {
  display: flex;
  justify-content: space-between;
  height: 16px;
  background: linear-gradient(90deg, #0a0a0c, #0d0b0e 60%, #1d0811 75%, #090c12 88%);
  color: #eee;
}
.apps { display: flex; }
.apps button { width: 20px; }
.apps svg { width: 10px; height: 10px; }
.apps button:first-child svg { width: 8px; height: 8px; }
.apps .active { background: #3e3e40; }
.tile { width: 10px; height: 10px; background: #fff; font-size: 10px; line-height: 10px; text-align: center; }
.revit { color: #1766a8; }
.acad { color: #b3202a; }
.word { background: #2b579a; color: #fff; font-size: 8px; }
.tray { display: flex; align-items: center; gap: 2px; padding-right: 8px; }
.tray .people { margin-right: 6px; }
.lang { width: 14px; text-align: center; }
time { width: 24px; line-height: 8px; text-align: center; }
.tray .notify { width: 10px; height: 10px; margin-left: 4px; }
```
